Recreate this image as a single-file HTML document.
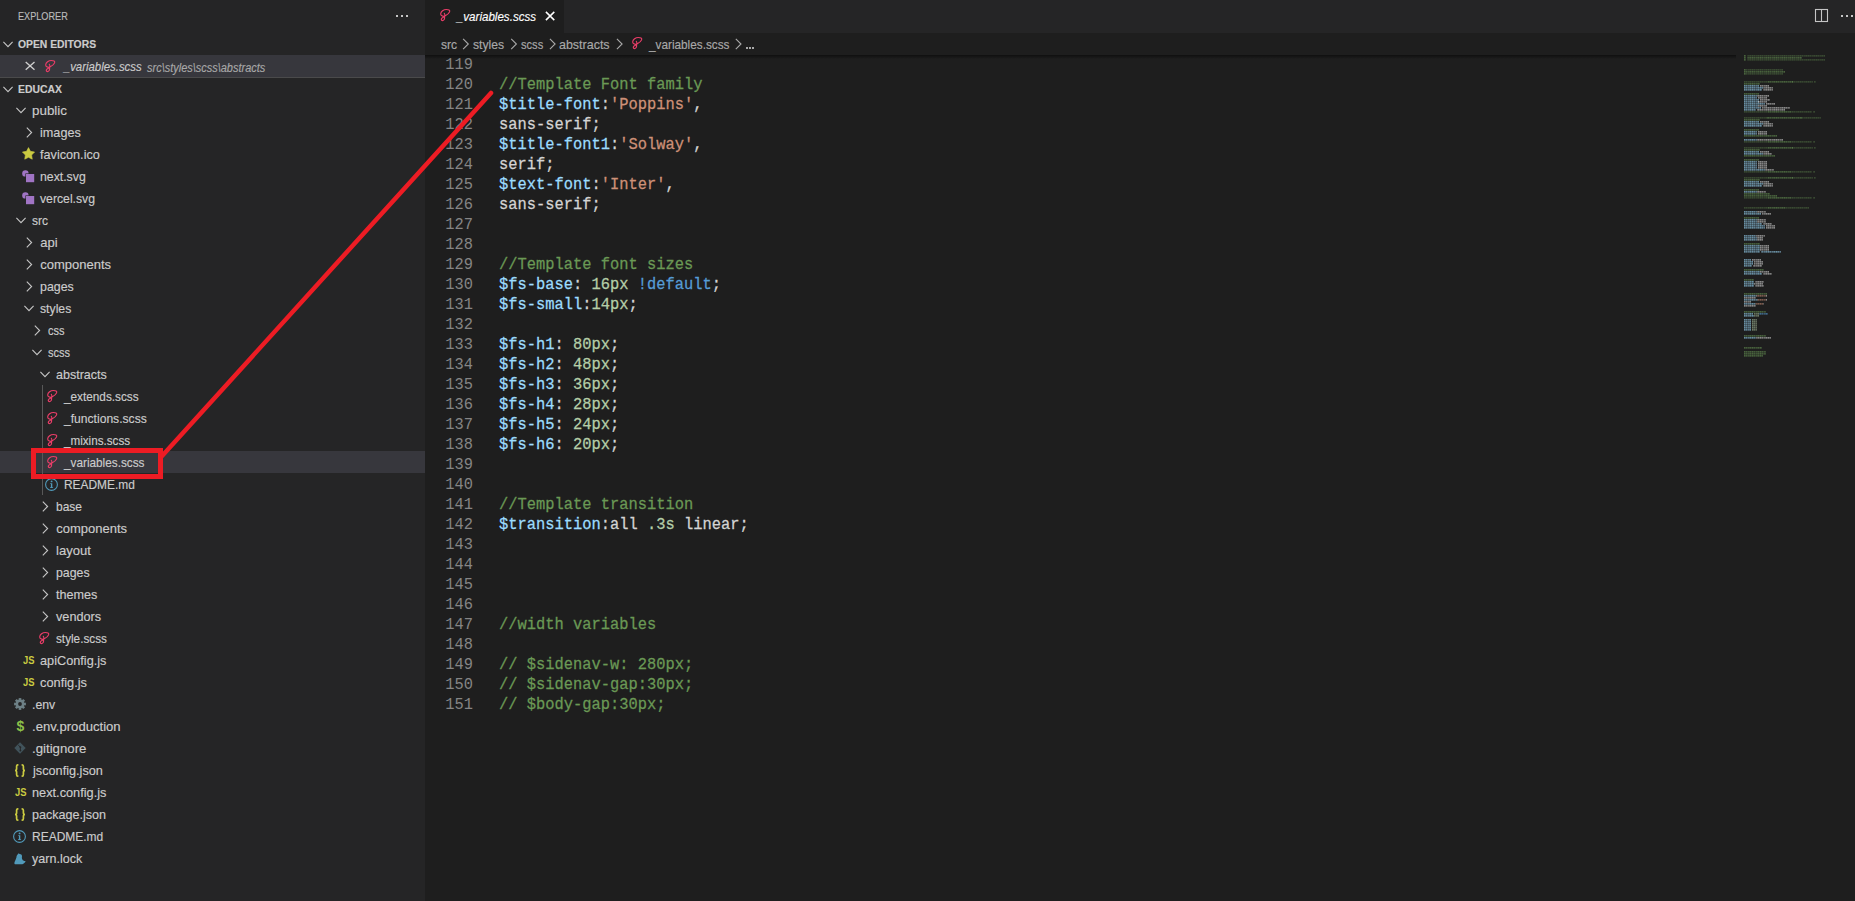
<!DOCTYPE html><html><head><meta charset="utf-8"><title>vscode</title><style>
*{box-sizing:border-box;margin:0;padding:0}
html,body{width:1855px;height:901px;overflow:hidden;background:#1e1e1e}
body{position:relative;font-family:"Liberation Sans",sans-serif;color:#cccccc}
.a{position:absolute;white-space:nowrap}
.tx{-webkit-text-stroke:0.15px currentColor}
svg{position:absolute;overflow:visible}
.code{position:absolute;left:499px;font-family:"Liberation Mono",monospace;font-size:15.42px;white-space:pre;height:20px;line-height:20px;color:#d4d4d4;transform:scaleY(1.07);transform-origin:0 14px;-webkit-text-stroke:0.25px currentColor}
.ln{position:absolute;left:425px;width:48px;text-align:right;color:#858585;font-family:"Liberation Mono",monospace;font-size:15.36px;height:20px;line-height:20px;transform:scaleY(1.07);transform-origin:0 14px}
.c{color:#6a9955}.v{color:#9cdcfe}.s{color:#ce9178}.n{color:#b5cea8}.k{color:#569cd6}
</style></head><body>
<div class="a" style="left:0;top:0;width:425px;height:901px;background:#252526"></div>
<div class="a tx" style="left:18.20px;top:9px;font-size:11px;line-height:14px;color:#bbbbbb;transform:scaleX(0.8300);transform-origin:0.00px 0;">EXPLORER</div>
<div class="a" style="left:396px;top:15px;width:2px;height:2px;background:#c5c5c5"></div>
<div class="a" style="left:401px;top:15px;width:2px;height:2px;background:#c5c5c5"></div>
<div class="a" style="left:406px;top:15px;width:2px;height:2px;background:#c5c5c5"></div>
<div class="a tx" style="left:17.90px;top:33px;font-size:11px;line-height:22px;color:#cccccc;font-weight:bold;transform:scaleX(0.9410);transform-origin:0.00px 0;">OPEN EDITORS</div>
<svg style="left:0;top:0" width="1" height="1"><polyline points="3.4000000000000004,41.9 8,46.7 12.6,41.9" fill="none" stroke="#c5c5c5" stroke-width="1.1"/></svg>
<div class="a" style="left:0;top:55px;width:425px;height:22px;background:#37373d"></div>
<div class="a" style="left:0;top:77px;width:425px;height:1px;background:#4a4a4b"></div>
<div class="a tx" style="left:63.55px;top:56px;font-size:13px;line-height:22px;color:#cccccc;font-style:italic;transform:scaleX(0.8756);transform-origin:-1.25px 0;">_variables.scss</div>
<div class="a tx" style="left:147.30px;top:57px;font-size:12px;line-height:22px;color:#a8a8a8;font-style:italic;transform:scaleX(0.9143);transform-origin:0.00px 0;">src\styles\scss\abstracts</div>
<svg style="left:0;top:0" width="1" height="1"><path d="M25.7 62 L34.5 69.8 M34.5 62 L25.7 69.8" stroke="#cfcfcf" stroke-width="1.35"/></svg>
<svg style="left:41.7px;top:57.0px" width="18" height="18" viewBox="0 0 18 18"><path d="M7.6 10.2 C5.6 10.5 3.5 9.7 3.7 7.7 C3.9 5.5 6.6 3.5 9.4 3.5 C11.6 3.5 13.2 4.3 12.6 5.9 C12 7.5 10 9 7.6 10.2 C7.7 11.4 7.8 12.6 7 13.8 C6.2 15 4.5 15 4.3 13.7 C4.1 12.5 5.6 11.5 7.6 10.8 M7.3 7.3 C7.9 8.3 8.3 9.3 7.6 10.2" fill="none" stroke="#ea3d68" stroke-width="1.15" stroke-linecap="round" stroke-linejoin="round"/></svg>
<div class="a tx" style="left:17.90px;top:78px;font-size:11px;line-height:22px;color:#cccccc;font-weight:bold;transform:scaleX(0.9441);transform-origin:0.00px 0;">EDUCAX</div>
<svg style="left:0;top:0" width="1" height="1"><polyline points="3.4000000000000004,86.9 8,91.69999999999999 12.6,86.9" fill="none" stroke="#c5c5c5" stroke-width="1.1"/></svg>
<div class="a tx" style="left:32.20px;top:100px;font-size:13px;line-height:22px;color:#cccccc;transform:scaleX(1.0294);transform-origin:0.00px 0;">public</div>
<svg style="left:0;top:0" width="1" height="1"><polyline points="16.4,107.9 21,112.69999999999999 25.6,107.9" fill="none" stroke="#c5c5c5" stroke-width="1.1"/></svg>
<div class="a tx" style="left:40.20px;top:122px;font-size:13px;line-height:22px;color:#cccccc;transform:scaleX(0.9738);transform-origin:0.00px 0;">images</div>
<svg style="left:0;top:0" width="1" height="1"><polyline points="26.799999999999997,127.7 31.6,132.5 26.799999999999997,137.3" fill="none" stroke="#c5c5c5" stroke-width="1.1"/></svg>
<div class="a tx" style="left:40.20px;top:144px;font-size:13px;line-height:22px;color:#cccccc;transform:scaleX(0.9740);transform-origin:0.00px 0;">favicon.ico</div>
<svg style="left:21.8px;top:146.7px" width="13" height="13" viewBox="0 0 13 13"><path d="M6.50 0.60 L8.44 4.33 L12.59 5.02 L9.64 8.02 L10.26 12.18 L6.50 10.30 L2.74 12.18 L3.36 8.02 L0.41 5.02 L4.56 4.33 Z" fill="#cbcb41" stroke="#cbcb41" stroke-width="0.6" stroke-linejoin="round"/></svg>
<div class="a tx" style="left:40.20px;top:166px;font-size:13px;line-height:22px;color:#cccccc;transform:scaleX(0.9443);transform-origin:0.00px 0;">next.svg</div>
<svg style="left:22.0px;top:170.0px" width="12" height="12" viewBox="0 0 12 12"><circle cx="3.4" cy="3.4" r="3.2" fill="#a074c4"/><rect x="3.4" y="3.4" width="8.6" height="8.6" fill="#252526"/><rect x="4" y="4" width="8.2" height="8.2" fill="#a074c4"/></svg>
<div class="a tx" style="left:40.20px;top:188px;font-size:13px;line-height:22px;color:#cccccc;transform:scaleX(0.9402);transform-origin:0.00px 0;">vercel.svg</div>
<svg style="left:22.0px;top:192.0px" width="12" height="12" viewBox="0 0 12 12"><circle cx="3.4" cy="3.4" r="3.2" fill="#a074c4"/><rect x="3.4" y="3.4" width="8.6" height="8.6" fill="#252526"/><rect x="4" y="4" width="8.2" height="8.2" fill="#a074c4"/></svg>
<div class="a tx" style="left:32.20px;top:210px;font-size:13px;line-height:22px;color:#cccccc;transform:scaleX(0.9217);transform-origin:0.00px 0;">src</div>
<svg style="left:0;top:0" width="1" height="1"><polyline points="16.4,217.9 21,222.7 25.6,217.9" fill="none" stroke="#c5c5c5" stroke-width="1.1"/></svg>
<div class="a tx" style="left:40.20px;top:232px;font-size:13px;line-height:22px;color:#cccccc;">api</div>
<svg style="left:0;top:0" width="1" height="1"><polyline points="26.799999999999997,237.7 31.6,242.5 26.799999999999997,247.3" fill="none" stroke="#c5c5c5" stroke-width="1.1"/></svg>
<div class="a tx" style="left:40.20px;top:254px;font-size:13px;line-height:22px;color:#cccccc;">components</div>
<svg style="left:0;top:0" width="1" height="1"><polyline points="26.799999999999997,259.7 31.6,264.5 26.799999999999997,269.3" fill="none" stroke="#c5c5c5" stroke-width="1.1"/></svg>
<div class="a tx" style="left:40.20px;top:276px;font-size:13px;line-height:22px;color:#cccccc;transform:scaleX(0.9521);transform-origin:0.00px 0;">pages</div>
<svg style="left:0;top:0" width="1" height="1"><polyline points="26.799999999999997,281.7 31.6,286.5 26.799999999999997,291.3" fill="none" stroke="#c5c5c5" stroke-width="1.1"/></svg>
<div class="a tx" style="left:40.20px;top:298px;font-size:13px;line-height:22px;color:#cccccc;transform:scaleX(0.9414);transform-origin:0.00px 0;">styles</div>
<svg style="left:0;top:0" width="1" height="1"><polyline points="24.4,305.9 29,310.70000000000005 33.6,305.9" fill="none" stroke="#c5c5c5" stroke-width="1.1"/></svg>
<div class="a tx" style="left:48.20px;top:320px;font-size:13px;line-height:22px;color:#cccccc;transform:scaleX(0.8462);transform-origin:0.00px 0;">css</div>
<svg style="left:0;top:0" width="1" height="1"><polyline points="34.8,325.7 39.6,330.5 34.8,335.3" fill="none" stroke="#c5c5c5" stroke-width="1.1"/></svg>
<div class="a tx" style="left:48.20px;top:342px;font-size:13px;line-height:22px;color:#cccccc;transform:scaleX(0.8500);transform-origin:0.00px 0;">scss</div>
<svg style="left:0;top:0" width="1" height="1"><polyline points="32.4,349.9 37,354.70000000000005 41.6,349.9" fill="none" stroke="#c5c5c5" stroke-width="1.1"/></svg>
<div class="a tx" style="left:56.20px;top:364px;font-size:13px;line-height:22px;color:#cccccc;transform:scaleX(0.9630);transform-origin:0.00px 0;">abstracts</div>
<svg style="left:0;top:0" width="1" height="1"><polyline points="40.4,371.9 45,376.70000000000005 49.6,371.9" fill="none" stroke="#c5c5c5" stroke-width="1.1"/></svg>
<div class="a tx" style="left:64.45px;top:386px;font-size:13px;line-height:22px;color:#cccccc;transform:scaleX(0.9063);transform-origin:-0.25px 0;">_extends.scss</div>
<svg style="left:43.9px;top:386.7px" width="18" height="18" viewBox="0 0 18 18"><path d="M7.6 10.2 C5.6 10.5 3.5 9.7 3.7 7.7 C3.9 5.5 6.6 3.5 9.4 3.5 C11.6 3.5 13.2 4.3 12.6 5.9 C12 7.5 10 9 7.6 10.2 C7.7 11.4 7.8 12.6 7 13.8 C6.2 15 4.5 15 4.3 13.7 C4.1 12.5 5.6 11.5 7.6 10.8 M7.3 7.3 C7.9 8.3 8.3 9.3 7.6 10.2" fill="none" stroke="#ea3d68" stroke-width="1.15" stroke-linecap="round" stroke-linejoin="round"/></svg>
<div class="a tx" style="left:64.45px;top:408px;font-size:13px;line-height:22px;color:#cccccc;transform:scaleX(0.9311);transform-origin:-0.25px 0;">_functions.scss</div>
<svg style="left:43.9px;top:408.7px" width="18" height="18" viewBox="0 0 18 18"><path d="M7.6 10.2 C5.6 10.5 3.5 9.7 3.7 7.7 C3.9 5.5 6.6 3.5 9.4 3.5 C11.6 3.5 13.2 4.3 12.6 5.9 C12 7.5 10 9 7.6 10.2 C7.7 11.4 7.8 12.6 7 13.8 C6.2 15 4.5 15 4.3 13.7 C4.1 12.5 5.6 11.5 7.6 10.8 M7.3 7.3 C7.9 8.3 8.3 9.3 7.6 10.2" fill="none" stroke="#ea3d68" stroke-width="1.15" stroke-linecap="round" stroke-linejoin="round"/></svg>
<div class="a tx" style="left:64.45px;top:430px;font-size:13px;line-height:22px;color:#cccccc;transform:scaleX(0.8973);transform-origin:-0.25px 0;">_mixins.scss</div>
<svg style="left:43.9px;top:430.7px" width="18" height="18" viewBox="0 0 18 18"><path d="M7.6 10.2 C5.6 10.5 3.5 9.7 3.7 7.7 C3.9 5.5 6.6 3.5 9.4 3.5 C11.6 3.5 13.2 4.3 12.6 5.9 C12 7.5 10 9 7.6 10.2 C7.7 11.4 7.8 12.6 7 13.8 C6.2 15 4.5 15 4.3 13.7 C4.1 12.5 5.6 11.5 7.6 10.8 M7.3 7.3 C7.9 8.3 8.3 9.3 7.6 10.2" fill="none" stroke="#ea3d68" stroke-width="1.15" stroke-linecap="round" stroke-linejoin="round"/></svg>
<div class="a" style="left:0;top:451px;width:425px;height:22px;background:#37373d"></div>
<div class="a tx" style="left:64.45px;top:452px;font-size:13px;line-height:22px;color:#cccccc;transform:scaleX(0.9056);transform-origin:-0.25px 0;">_variables.scss</div>
<svg style="left:43.9px;top:452.7px" width="18" height="18" viewBox="0 0 18 18"><path d="M7.6 10.2 C5.6 10.5 3.5 9.7 3.7 7.7 C3.9 5.5 6.6 3.5 9.4 3.5 C11.6 3.5 13.2 4.3 12.6 5.9 C12 7.5 10 9 7.6 10.2 C7.7 11.4 7.8 12.6 7 13.8 C6.2 15 4.5 15 4.3 13.7 C4.1 12.5 5.6 11.5 7.6 10.8 M7.3 7.3 C7.9 8.3 8.3 9.3 7.6 10.2" fill="none" stroke="#ea3d68" stroke-width="1.15" stroke-linecap="round" stroke-linejoin="round"/></svg>
<div class="a tx" style="left:64.20px;top:474px;font-size:13px;line-height:22px;color:#cccccc;transform:scaleX(0.9165);transform-origin:0.00px 0;">README.md</div>
<svg style="left:45.4px;top:478.0px" width="13" height="13" viewBox="0 0 13 13"><circle cx="6.5" cy="6.5" r="5.9" fill="none" stroke="#519aba" stroke-width="1.1"/><circle cx="6.6" cy="3.4" r="0.95" fill="#519aba"/><path d="M5.2 5.2 H7.3 V9.2 H8.1 V10 H5 V9.2 H5.9 V6 H5.2 Z" fill="#519aba"/></svg>
<div class="a tx" style="left:56.20px;top:496px;font-size:13px;line-height:22px;color:#cccccc;transform:scaleX(0.9239);transform-origin:0.00px 0;">base</div>
<svg style="left:0;top:0" width="1" height="1"><polyline points="42.8,501.7 47.6,506.5 42.8,511.3" fill="none" stroke="#c5c5c5" stroke-width="1.1"/></svg>
<div class="a tx" style="left:56.20px;top:518px;font-size:13px;line-height:22px;color:#cccccc;">components</div>
<svg style="left:0;top:0" width="1" height="1"><polyline points="42.8,523.7 47.6,528.5 42.8,533.3" fill="none" stroke="#c5c5c5" stroke-width="1.1"/></svg>
<div class="a tx" style="left:56.20px;top:540px;font-size:13px;line-height:22px;color:#cccccc;transform:scaleX(1.0043);transform-origin:0.00px 0;">layout</div>
<svg style="left:0;top:0" width="1" height="1"><polyline points="42.8,545.7 47.6,550.5 42.8,555.3" fill="none" stroke="#c5c5c5" stroke-width="1.1"/></svg>
<div class="a tx" style="left:56.20px;top:562px;font-size:13px;line-height:22px;color:#cccccc;transform:scaleX(0.9493);transform-origin:0.00px 0;">pages</div>
<svg style="left:0;top:0" width="1" height="1"><polyline points="42.8,567.7 47.6,572.5 42.8,577.3" fill="none" stroke="#c5c5c5" stroke-width="1.1"/></svg>
<div class="a tx" style="left:56.20px;top:584px;font-size:13px;line-height:22px;color:#cccccc;transform:scaleX(0.9708);transform-origin:0.00px 0;">themes</div>
<svg style="left:0;top:0" width="1" height="1"><polyline points="42.8,589.7 47.6,594.5 42.8,599.3" fill="none" stroke="#c5c5c5" stroke-width="1.1"/></svg>
<div class="a tx" style="left:56.20px;top:606px;font-size:13px;line-height:22px;color:#cccccc;transform:scaleX(0.9751);transform-origin:0.00px 0;">vendors</div>
<svg style="left:0;top:0" width="1" height="1"><polyline points="42.8,611.7 47.6,616.5 42.8,621.3" fill="none" stroke="#c5c5c5" stroke-width="1.1"/></svg>
<div class="a tx" style="left:56.20px;top:628px;font-size:13px;line-height:22px;color:#cccccc;transform:scaleX(0.9031);transform-origin:0.00px 0;">style.scss</div>
<svg style="left:35.9px;top:628.7px" width="18" height="18" viewBox="0 0 18 18"><path d="M7.6 10.2 C5.6 10.5 3.5 9.7 3.7 7.7 C3.9 5.5 6.6 3.5 9.4 3.5 C11.6 3.5 13.2 4.3 12.6 5.9 C12 7.5 10 9 7.6 10.2 C7.7 11.4 7.8 12.6 7 13.8 C6.2 15 4.5 15 4.3 13.7 C4.1 12.5 5.6 11.5 7.6 10.8 M7.3 7.3 C7.9 8.3 8.3 9.3 7.6 10.2" fill="none" stroke="#ea3d68" stroke-width="1.15" stroke-linecap="round" stroke-linejoin="round"/></svg>
<div class="a tx" style="left:40.20px;top:650px;font-size:13px;line-height:22px;color:#cccccc;transform:scaleX(0.9779);transform-origin:0.00px 0;">apiConfig.js</div>
<div class="a" style="left:23.00px;top:652.90px;font-size:11.2px;line-height:14px;font-weight:bold;color:#cbcb41;transform:scaleX(0.84);transform-origin:0 0">JS</div>
<div class="a tx" style="left:40.20px;top:672px;font-size:13px;line-height:22px;color:#cccccc;transform:scaleX(0.9843);transform-origin:0.00px 0;">config.js</div>
<div class="a" style="left:23.00px;top:674.90px;font-size:11.2px;line-height:14px;font-weight:bold;color:#cbcb41;transform:scaleX(0.84);transform-origin:0 0">JS</div>
<div class="a tx" style="left:32.20px;top:694px;font-size:13px;line-height:22px;color:#cccccc;transform:scaleX(0.9469);transform-origin:0.00px 0;">.env</div>
<svg style="left:13.9px;top:698.0px" width="12" height="12" viewBox="0 0 12 12"><circle cx="6" cy="6" r="4.4" fill="#6d8086"/><rect x="4.7" y="0.1" width="2.6" height="3" fill="#6d8086" transform="rotate(0 6 6)"/><rect x="4.7" y="0.1" width="2.6" height="3" fill="#6d8086" transform="rotate(45 6 6)"/><rect x="4.7" y="0.1" width="2.6" height="3" fill="#6d8086" transform="rotate(90 6 6)"/><rect x="4.7" y="0.1" width="2.6" height="3" fill="#6d8086" transform="rotate(135 6 6)"/><rect x="4.7" y="0.1" width="2.6" height="3" fill="#6d8086" transform="rotate(180 6 6)"/><rect x="4.7" y="0.1" width="2.6" height="3" fill="#6d8086" transform="rotate(225 6 6)"/><rect x="4.7" y="0.1" width="2.6" height="3" fill="#6d8086" transform="rotate(270 6 6)"/><rect x="4.7" y="0.1" width="2.6" height="3" fill="#6d8086" transform="rotate(315 6 6)"/><circle cx="6" cy="6" r="1.9" fill="#252526"/></svg>
<div class="a tx" style="left:32.20px;top:716px;font-size:13px;line-height:22px;color:#cccccc;transform:scaleX(1.0080);transform-origin:0.00px 0;">.env.production</div>
<div class="a" style="left:16.50px;top:718.20px;font-size:14px;line-height:16px;font-weight:bold;color:#8dc149">$</div>
<div class="a tx" style="left:32.20px;top:738px;font-size:13px;line-height:22px;color:#cccccc;transform:scaleX(1.0187);transform-origin:0.00px 0;">.gitignore</div>
<svg style="left:13.7px;top:742.0px" width="12" height="12" viewBox="0 0 12 12"><path d="M6 0.3 L11.7 6 L6 11.7 L0.3 6 Z" fill="#41535b"/><path d="M4.2 3 L6.4 5.2 V9" stroke="#252526" stroke-width="0.9" fill="none"/><circle cx="6.4" cy="5.2" r="0.9" fill="#252526"/><circle cx="6.4" cy="8.6" r="0.9" fill="#252526"/></svg>
<div class="a tx" style="left:32.70px;top:760px;font-size:13px;line-height:22px;color:#cccccc;transform:scaleX(0.9778);transform-origin:-0.50px 0;">jsconfig.json</div>
<svg style="left:14.1px;top:763.5px" width="12" height="13" viewBox="0 0 12 13"><path d="M4.4 0.9 H3.8 C2.8 0.9 2.6 1.6 2.6 2.6 V4.8 C2.6 5.8 2.2 6.5 1 6.5 C2.2 6.5 2.6 7.2 2.6 8.2 V10.4 C2.6 11.4 2.8 12.1 3.8 12.1 H4.4" fill="none" stroke="#cbcb41" stroke-width="1.7"/><path d="M7.6 0.9 H8.2 C9.2 0.9 9.4 1.6 9.4 2.6 V4.8 C9.4 5.8 9.8 6.5 11 6.5 C9.8 6.5 9.4 7.2 9.4 8.2 V10.4 C9.4 11.4 9.2 12.1 8.2 12.1 H7.6" fill="none" stroke="#cbcb41" stroke-width="1.7"/></svg>
<div class="a tx" style="left:32.20px;top:782px;font-size:13px;line-height:22px;color:#cccccc;transform:scaleX(0.9803);transform-origin:0.00px 0;">next.config.js</div>
<div class="a" style="left:15.00px;top:784.90px;font-size:11.2px;line-height:14px;font-weight:bold;color:#cbcb41;transform:scaleX(0.84);transform-origin:0 0">JS</div>
<div class="a tx" style="left:32.20px;top:804px;font-size:13px;line-height:22px;color:#cccccc;transform:scaleX(0.9673);transform-origin:0.00px 0;">package.json</div>
<svg style="left:14.1px;top:807.5px" width="12" height="13" viewBox="0 0 12 13"><path d="M4.4 0.9 H3.8 C2.8 0.9 2.6 1.6 2.6 2.6 V4.8 C2.6 5.8 2.2 6.5 1 6.5 C2.2 6.5 2.6 7.2 2.6 8.2 V10.4 C2.6 11.4 2.8 12.1 3.8 12.1 H4.4" fill="none" stroke="#cbcb41" stroke-width="1.7"/><path d="M7.6 0.9 H8.2 C9.2 0.9 9.4 1.6 9.4 2.6 V4.8 C9.4 5.8 9.8 6.5 11 6.5 C9.8 6.5 9.4 7.2 9.4 8.2 V10.4 C9.4 11.4 9.2 12.1 8.2 12.1 H7.6" fill="none" stroke="#cbcb41" stroke-width="1.7"/></svg>
<div class="a tx" style="left:32.20px;top:826px;font-size:13px;line-height:22px;color:#cccccc;transform:scaleX(0.9217);transform-origin:0.00px 0;">README.md</div>
<svg style="left:13.4px;top:830.0px" width="13" height="13" viewBox="0 0 13 13"><circle cx="6.5" cy="6.5" r="5.9" fill="none" stroke="#519aba" stroke-width="1.1"/><circle cx="6.6" cy="3.4" r="0.95" fill="#519aba"/><path d="M5.2 5.2 H7.3 V9.2 H8.1 V10 H5 V9.2 H5.9 V6 H5.2 Z" fill="#519aba"/></svg>
<div class="a tx" style="left:32.20px;top:848px;font-size:13px;line-height:22px;color:#cccccc;transform:scaleX(0.9646);transform-origin:0.00px 0;">yarn.lock</div>
<svg style="left:13.7px;top:852.6px" width="12" height="12" viewBox="0 0 12 12"><path d="M4.6 0.2 L5.6 1 C6.9 0.9 8 1.8 8 3.1 C8 4.4 7.6 5.1 8.4 6.6 C8.9 7.6 9.8 8.2 11.6 8.1 C11 9.8 9.8 11 8.4 11.2 L1 11.3 C0.4 11 0.2 10 0.6 9 C1.2 7.4 2 6 2.4 4.4 C2.6 3 3 1.9 3.9 1.3 Z" fill="#519aba"/></svg>
<div class="a" style="left:42px;top:385px;width:1px;height:110px;background:#585858"></div>
<div class="a" style="left:425px;top:0;width:1430px;height:33px;background:#252526"></div>
<div class="a" style="left:425px;top:0;width:139px;height:33px;background:#1e1e1e"></div>
<svg style="left:437.0px;top:5.8px" width="18" height="18" viewBox="0 0 18 18"><path d="M7.6 10.2 C5.6 10.5 3.5 9.7 3.7 7.7 C3.9 5.5 6.6 3.5 9.4 3.5 C11.6 3.5 13.2 4.3 12.6 5.9 C12 7.5 10 9 7.6 10.2 C7.7 11.4 7.8 12.6 7 13.8 C6.2 15 4.5 15 4.3 13.7 C4.1 12.5 5.6 11.5 7.6 10.8 M7.3 7.3 C7.9 8.3 8.3 9.3 7.6 10.2" fill="none" stroke="#ea3d68" stroke-width="1.15" stroke-linecap="round" stroke-linejoin="round"/></svg>
<div class="a tx" style="left:457.35px;top:9px;font-size:13px;line-height:16px;color:#ffffff;font-style:italic;transform:scaleX(0.8911);transform-origin:-1.25px 0;">_variables.scss</div>
<svg style="left:0;top:0" width="1" height="1"><path d="M545.9 11.9 L554.3 20.1 M554.3 11.9 L545.9 20.1" stroke="#ffffff" stroke-width="1.5"/></svg>
<div class="a tx" style="left:441.00px;top:36px;font-size:13px;line-height:18px;color:#a9a9a9;transform:scaleX(0.9275);transform-origin:0.00px 0;">src</div>
<div class="a tx" style="left:473.10px;top:36px;font-size:13px;line-height:18px;color:#a9a9a9;transform:scaleX(0.9353);transform-origin:0.00px 0;">styles</div>
<div class="a tx" style="left:520.80px;top:36px;font-size:13px;line-height:18px;color:#a9a9a9;transform:scaleX(0.8538);transform-origin:0.00px 0;">scss</div>
<div class="a tx" style="left:559.30px;top:36px;font-size:13px;line-height:18px;color:#a9a9a9;transform:scaleX(0.9592);transform-origin:0.00px 0;">abstracts</div>
<div class="a tx" style="left:648.85px;top:36px;font-size:13px;line-height:18px;color:#a9a9a9;transform:scaleX(0.9056);transform-origin:-0.25px 0;">_variables.scss</div>
<svg style="left:0;top:0" width="1" height="1"><polyline points="463.09999999999997,38.8 468.3,44 463.09999999999997,49.2" fill="none" stroke="#a9a9a9" stroke-width="1.1"/></svg>
<svg style="left:0;top:0" width="1" height="1"><polyline points="511.2,38.8 516.4,44 511.2,49.2" fill="none" stroke="#a9a9a9" stroke-width="1.1"/></svg>
<svg style="left:0;top:0" width="1" height="1"><polyline points="549.9,38.8 555.0999999999999,44 549.9,49.2" fill="none" stroke="#a9a9a9" stroke-width="1.1"/></svg>
<svg style="left:0;top:0" width="1" height="1"><polyline points="616.9,38.8 622.0999999999999,44 616.9,49.2" fill="none" stroke="#a9a9a9" stroke-width="1.1"/></svg>
<svg style="left:0;top:0" width="1" height="1"><polyline points="735.8000000000001,38.8 741.0,44 735.8000000000001,49.2" fill="none" stroke="#a9a9a9" stroke-width="1.1"/></svg>
<svg style="left:628.6px;top:34.3px" width="18" height="18" viewBox="0 0 18 18"><path d="M7.6 10.2 C5.6 10.5 3.5 9.7 3.7 7.7 C3.9 5.5 6.6 3.5 9.4 3.5 C11.6 3.5 13.2 4.3 12.6 5.9 C12 7.5 10 9 7.6 10.2 C7.7 11.4 7.8 12.6 7 13.8 C6.2 15 4.5 15 4.3 13.7 C4.1 12.5 5.6 11.5 7.6 10.8 M7.3 7.3 C7.9 8.3 8.3 9.3 7.6 10.2" fill="none" stroke="#ea3d68" stroke-width="1.15" stroke-linecap="round" stroke-linejoin="round"/></svg>
<div class="a" style="left:746px;top:47px;width:1.6px;height:1.6px;background:#a9a9a9"></div>
<div class="a" style="left:749px;top:47px;width:1.6px;height:1.6px;background:#a9a9a9"></div>
<div class="a" style="left:752px;top:47px;width:1.6px;height:1.6px;background:#a9a9a9"></div>
<svg style="left:0;top:0" width="1" height="1"><rect x="1815.5" y="9.5" width="12" height="12" fill="none" stroke="#c5c5c5" stroke-width="1.1"/><path d="M1821.5 9.5 V21.5" stroke="#c5c5c5" stroke-width="1.1"/></svg>
<div class="a" style="left:1841px;top:15px;width:2px;height:2px;background:#c5c5c5"></div>
<div class="a" style="left:1846px;top:15px;width:2px;height:2px;background:#c5c5c5"></div>
<div class="a" style="left:1851px;top:15px;width:2px;height:2px;background:#c5c5c5"></div>
<div class="ln" style="top:55px">119</div>
<div class="ln" style="top:75px">120</div>
<div class="code" style="top:75px"><span class="c">//Template Font family</span></div>
<div class="ln" style="top:95px">121</div>
<div class="code" style="top:95px"><span class="v">$title-font</span>:<span class="s">'Poppins'</span>,</div>
<div class="ln" style="top:115px">122</div>
<div class="code" style="top:115px">sans-serif;</div>
<div class="ln" style="top:135px">123</div>
<div class="code" style="top:135px"><span class="v">$title-font1</span>:<span class="s">'Solway'</span>,</div>
<div class="ln" style="top:155px">124</div>
<div class="code" style="top:155px">serif;</div>
<div class="ln" style="top:175px">125</div>
<div class="code" style="top:175px"><span class="v">$text-font</span>:<span class="s">'Inter'</span>,</div>
<div class="ln" style="top:195px">126</div>
<div class="code" style="top:195px">sans-serif;</div>
<div class="ln" style="top:215px">127</div>
<div class="ln" style="top:235px">128</div>
<div class="ln" style="top:255px">129</div>
<div class="code" style="top:255px"><span class="c">//Template font sizes</span></div>
<div class="ln" style="top:275px">130</div>
<div class="code" style="top:275px"><span class="v">$fs-base</span>: <span class="n">16px</span> <span class="k">!default</span>;</div>
<div class="ln" style="top:295px">131</div>
<div class="code" style="top:295px"><span class="v">$fs-small</span>:<span class="n">14px</span>;</div>
<div class="ln" style="top:315px">132</div>
<div class="ln" style="top:335px">133</div>
<div class="code" style="top:335px"><span class="v">$fs-h1</span>: <span class="n">80px</span>;</div>
<div class="ln" style="top:355px">134</div>
<div class="code" style="top:355px"><span class="v">$fs-h2</span>: <span class="n">48px</span>;</div>
<div class="ln" style="top:375px">135</div>
<div class="code" style="top:375px"><span class="v">$fs-h3</span>: <span class="n">36px</span>;</div>
<div class="ln" style="top:395px">136</div>
<div class="code" style="top:395px"><span class="v">$fs-h4</span>: <span class="n">28px</span>;</div>
<div class="ln" style="top:415px">137</div>
<div class="code" style="top:415px"><span class="v">$fs-h5</span>: <span class="n">24px</span>;</div>
<div class="ln" style="top:435px">138</div>
<div class="code" style="top:435px"><span class="v">$fs-h6</span>: <span class="n">20px</span>;</div>
<div class="ln" style="top:455px">139</div>
<div class="ln" style="top:475px">140</div>
<div class="ln" style="top:495px">141</div>
<div class="code" style="top:495px"><span class="c">//Template transition</span></div>
<div class="ln" style="top:515px">142</div>
<div class="code" style="top:515px"><span class="v">$transition</span>:all <span class="n">.3s</span> linear;</div>
<div class="ln" style="top:535px">143</div>
<div class="ln" style="top:555px">144</div>
<div class="ln" style="top:575px">145</div>
<div class="ln" style="top:595px">146</div>
<div class="ln" style="top:615px">147</div>
<div class="code" style="top:615px"><span class="c">//width variables</span></div>
<div class="ln" style="top:635px">148</div>
<div class="ln" style="top:655px">149</div>
<div class="code" style="top:655px"><span class="c">// $sidenav-w: 280px;</span></div>
<div class="ln" style="top:675px">150</div>
<div class="code" style="top:675px"><span class="c">// $sidenav-gap:30px;</span></div>
<div class="ln" style="top:695px">151</div>
<div class="code" style="top:695px"><span class="c">// $body-gap:30px;</span></div>
<div class="a" style="left:425px;top:55px;width:1311px;height:4px;background:linear-gradient(rgba(0,0,0,0.5),rgba(0,0,0,0))"></div>
<svg style="left:0;top:0" width="1855" height="901"><defs><pattern id="mmg" x="1744" y="0" width="8" height="2" patternUnits="userSpaceOnUse"><rect x="0" y="0" width="1" height="2" fill="rgba(106,153,85,0.62)"/><rect x="1" y="0" width="1" height="2" fill="rgba(106,153,85,0.40)"/><rect x="2" y="0" width="1" height="2" fill="rgba(106,153,85,0.56)"/><rect x="3" y="0" width="1" height="2" fill="rgba(106,153,85,0.34)"/><rect x="4" y="0" width="1" height="2" fill="rgba(106,153,85,0.50)"/><rect x="5" y="0" width="1" height="2" fill="rgba(106,153,85,0.43)"/><rect x="6" y="0" width="1" height="2" fill="rgba(106,153,85,0.59)"/><rect x="7" y="0" width="1" height="2" fill="rgba(106,153,85,0.37)"/></pattern><pattern id="mmd" x="1744" y="0" width="8" height="2" patternUnits="userSpaceOnUse"><rect x="0" y="0" width="1" height="2" fill="rgba(106,153,85,0.40)"/><rect x="1" y="0" width="1" height="2" fill="rgba(106,153,85,0.26)"/><rect x="2" y="0" width="1" height="2" fill="rgba(106,153,85,0.36)"/><rect x="3" y="0" width="1" height="2" fill="rgba(106,153,85,0.22)"/><rect x="4" y="0" width="1" height="2" fill="rgba(106,153,85,0.32)"/><rect x="5" y="0" width="1" height="2" fill="rgba(106,153,85,0.28)"/><rect x="6" y="0" width="1" height="2" fill="rgba(106,153,85,0.38)"/><rect x="7" y="0" width="1" height="2" fill="rgba(106,153,85,0.24)"/></pattern><pattern id="mmb" x="1744" y="0" width="8" height="2" patternUnits="userSpaceOnUse"><rect x="0" y="0" width="1" height="2" fill="rgba(156,220,254,0.66)"/><rect x="1" y="0" width="1" height="2" fill="rgba(156,220,254,0.43)"/><rect x="2" y="0" width="1" height="2" fill="rgba(156,220,254,0.59)"/><rect x="3" y="0" width="1" height="2" fill="rgba(156,220,254,0.36)"/><rect x="4" y="0" width="1" height="2" fill="rgba(156,220,254,0.53)"/><rect x="5" y="0" width="1" height="2" fill="rgba(156,220,254,0.46)"/><rect x="6" y="0" width="1" height="2" fill="rgba(156,220,254,0.63)"/><rect x="7" y="0" width="1" height="2" fill="rgba(156,220,254,0.40)"/></pattern><pattern id="mmw" x="1744" y="0" width="8" height="2" patternUnits="userSpaceOnUse"><rect x="0" y="0" width="1" height="2" fill="rgba(212,212,212,0.66)"/><rect x="1" y="0" width="1" height="2" fill="rgba(212,212,212,0.43)"/><rect x="2" y="0" width="1" height="2" fill="rgba(212,212,212,0.59)"/><rect x="3" y="0" width="1" height="2" fill="rgba(212,212,212,0.36)"/><rect x="4" y="0" width="1" height="2" fill="rgba(212,212,212,0.53)"/><rect x="5" y="0" width="1" height="2" fill="rgba(212,212,212,0.46)"/><rect x="6" y="0" width="1" height="2" fill="rgba(212,212,212,0.63)"/><rect x="7" y="0" width="1" height="2" fill="rgba(212,212,212,0.40)"/></pattern><pattern id="mmo" x="1744" y="0" width="8" height="2" patternUnits="userSpaceOnUse"><rect x="0" y="0" width="1" height="2" fill="rgba(206,145,120,0.62)"/><rect x="1" y="0" width="1" height="2" fill="rgba(206,145,120,0.40)"/><rect x="2" y="0" width="1" height="2" fill="rgba(206,145,120,0.56)"/><rect x="3" y="0" width="1" height="2" fill="rgba(206,145,120,0.34)"/><rect x="4" y="0" width="1" height="2" fill="rgba(206,145,120,0.50)"/><rect x="5" y="0" width="1" height="2" fill="rgba(206,145,120,0.43)"/><rect x="6" y="0" width="1" height="2" fill="rgba(206,145,120,0.59)"/><rect x="7" y="0" width="1" height="2" fill="rgba(206,145,120,0.37)"/></pattern><pattern id="mmn" x="1744" y="0" width="8" height="2" patternUnits="userSpaceOnUse"><rect x="0" y="0" width="1" height="2" fill="rgba(181,206,168,0.60)"/><rect x="1" y="0" width="1" height="2" fill="rgba(181,206,168,0.39)"/><rect x="2" y="0" width="1" height="2" fill="rgba(181,206,168,0.54)"/><rect x="3" y="0" width="1" height="2" fill="rgba(181,206,168,0.33)"/><rect x="4" y="0" width="1" height="2" fill="rgba(181,206,168,0.48)"/><rect x="5" y="0" width="1" height="2" fill="rgba(181,206,168,0.42)"/><rect x="6" y="0" width="1" height="2" fill="rgba(181,206,168,0.57)"/><rect x="7" y="0" width="1" height="2" fill="rgba(181,206,168,0.36)"/></pattern><pattern id="mmk" x="1744" y="0" width="8" height="2" patternUnits="userSpaceOnUse"><rect x="0" y="0" width="1" height="2" fill="rgba(86,156,214,0.68)"/><rect x="1" y="0" width="1" height="2" fill="rgba(86,156,214,0.44)"/><rect x="2" y="0" width="1" height="2" fill="rgba(86,156,214,0.61)"/><rect x="3" y="0" width="1" height="2" fill="rgba(86,156,214,0.37)"/><rect x="4" y="0" width="1" height="2" fill="rgba(86,156,214,0.54)"/><rect x="5" y="0" width="1" height="2" fill="rgba(86,156,214,0.48)"/><rect x="6" y="0" width="1" height="2" fill="rgba(86,156,214,0.65)"/><rect x="7" y="0" width="1" height="2" fill="rgba(86,156,214,0.41)"/></pattern></defs><rect x="1744" y="55.1" width="2" height="1.5" fill="url(#mmg)"/><rect x="1747" y="55.1" width="78" height="1.5" fill="url(#mmd)"/><rect x="1744" y="57.1" width="2" height="1.5" fill="url(#mmg)"/><rect x="1747" y="57.1" width="55" height="1.5" fill="url(#mmg)"/><rect x="1744" y="59.1" width="2" height="1.5" fill="url(#mmg)"/><rect x="1747" y="59.1" width="78" height="1.5" fill="url(#mmd)"/><rect x="1744" y="69.1" width="2" height="1.5" fill="url(#mmg)"/><rect x="1746" y="69.1" width="37" height="1.5" fill="url(#mmd)"/><rect x="1744" y="71.1" width="41" height="1.5" fill="url(#mmg)"/><rect x="1744" y="73.1" width="2" height="1.5" fill="url(#mmg)"/><rect x="1746" y="73.1" width="37" height="1.5" fill="url(#mmd)"/><rect x="1744" y="81.1" width="24" height="1.5" fill="url(#mmd)"/><rect x="1768" y="81.1" width="25" height="1.5" fill="url(#mmg)"/><rect x="1792" y="81.1" width="21" height="1.5" fill="url(#mmd)"/><rect x="1814" y="81.1" width="2" height="1.5" fill="url(#mmd)"/><rect x="1744" y="83.1" width="16" height="1.5" fill="url(#mmg)"/><rect x="1744" y="85.1" width="15" height="1.5" fill="url(#mmb)"/><rect x="1760" y="85.1" width="9" height="1.5" fill="url(#mmw)"/><rect x="1744" y="87.1" width="19" height="1.5" fill="url(#mmb)"/><rect x="1763" y="87.1" width="10" height="1.5" fill="url(#mmw)"/><rect x="1744" y="89.1" width="18" height="1.5" fill="url(#mmb)"/><rect x="1763" y="89.1" width="10" height="1.5" fill="url(#mmw)"/><rect x="1744" y="93.1" width="15" height="1.5" fill="url(#mmg)"/><rect x="1744" y="95.1" width="13" height="1.5" fill="url(#mmb)"/><rect x="1757" y="95.1" width="12" height="1.5" fill="url(#mmw)"/><rect x="1744" y="97.1" width="13" height="1.5" fill="url(#mmb)"/><rect x="1758" y="97.1" width="9" height="1.5" fill="url(#mmw)"/><rect x="1744" y="99.1" width="15" height="1.5" fill="url(#mmb)"/><rect x="1760" y="99.1" width="10" height="1.5" fill="url(#mmw)"/><rect x="1744" y="101.1" width="15" height="1.5" fill="url(#mmb)"/><rect x="1758" y="101.1" width="9" height="1.5" fill="url(#mmw)"/><rect x="1744" y="103.1" width="21" height="1.5" fill="url(#mmb)"/><rect x="1766" y="103.1" width="9" height="1.5" fill="url(#mmw)"/><rect x="1744" y="105.1" width="14" height="1.5" fill="url(#mmb)"/><rect x="1758" y="105.1" width="9" height="1.5" fill="url(#mmw)"/><rect x="1744" y="107.1" width="17" height="1.5" fill="url(#mmb)"/><rect x="1762" y="107.1" width="28" height="1.5" fill="url(#mmw)"/><rect x="1744" y="109.1" width="12" height="1.5" fill="url(#mmb)"/><rect x="1757" y="109.1" width="28" height="1.5" fill="url(#mmw)"/><rect x="1744" y="111.1" width="24" height="1.5" fill="url(#mmd)"/><rect x="1768" y="111.1" width="23" height="1.5" fill="url(#mmg)"/><rect x="1791" y="111.1" width="21" height="1.5" fill="url(#mmd)"/><rect x="1813" y="111.1" width="2" height="1.5" fill="url(#mmd)"/><rect x="1744" y="117.1" width="24" height="1.5" fill="url(#mmd)"/><rect x="1767" y="117.1" width="35" height="1.5" fill="url(#mmg)"/><rect x="1801" y="117.1" width="18" height="1.5" fill="url(#mmd)"/><rect x="1819" y="117.1" width="2" height="1.5" fill="url(#mmd)"/><rect x="1744" y="119.1" width="16" height="1.5" fill="url(#mmg)"/><rect x="1744" y="121.1" width="15" height="1.5" fill="url(#mmb)"/><rect x="1760" y="121.1" width="9" height="1.5" fill="url(#mmw)"/><rect x="1744" y="123.1" width="19" height="1.5" fill="url(#mmb)"/><rect x="1763" y="123.1" width="10" height="1.5" fill="url(#mmw)"/><rect x="1744" y="125.1" width="18" height="1.5" fill="url(#mmb)"/><rect x="1763" y="125.1" width="10" height="1.5" fill="url(#mmw)"/><rect x="1744" y="129.1" width="15" height="1.5" fill="url(#mmg)"/><rect x="1744" y="131.1" width="13" height="1.5" fill="url(#mmb)"/><rect x="1758" y="131.1" width="9" height="1.5" fill="url(#mmw)"/><rect x="1744" y="133.1" width="13" height="1.5" fill="url(#mmb)"/><rect x="1758" y="133.1" width="9" height="1.5" fill="url(#mmw)"/><rect x="1744" y="135.1" width="33" height="1.5" fill="url(#mmg)"/><rect x="1744" y="139.1" width="13" height="1.5" fill="url(#mmb)"/><rect x="1757" y="139.1" width="26" height="1.5" fill="url(#mmw)"/><rect x="1744" y="141.1" width="24" height="1.5" fill="url(#mmd)"/><rect x="1768" y="141.1" width="23" height="1.5" fill="url(#mmg)"/><rect x="1791" y="141.1" width="21" height="1.5" fill="url(#mmd)"/><rect x="1813" y="141.1" width="2" height="1.5" fill="url(#mmd)"/><rect x="1744" y="147.1" width="24" height="1.5" fill="url(#mmd)"/><rect x="1768" y="147.1" width="25" height="1.5" fill="url(#mmg)"/><rect x="1792" y="147.1" width="21" height="1.5" fill="url(#mmd)"/><rect x="1814" y="147.1" width="2" height="1.5" fill="url(#mmd)"/><rect x="1744" y="149.1" width="16" height="1.5" fill="url(#mmg)"/><rect x="1744" y="151.1" width="15" height="1.5" fill="url(#mmb)"/><rect x="1760" y="151.1" width="9" height="1.5" fill="url(#mmw)"/><rect x="1744" y="153.1" width="19" height="1.5" fill="url(#mmb)"/><rect x="1763" y="153.1" width="9" height="1.5" fill="url(#mmw)"/><rect x="1744" y="155.1" width="31" height="1.5" fill="url(#mmg)"/><rect x="1744" y="159.1" width="15" height="1.5" fill="url(#mmg)"/><rect x="1744" y="161.1" width="13" height="1.5" fill="url(#mmb)"/><rect x="1758" y="161.1" width="9" height="1.5" fill="url(#mmw)"/><rect x="1744" y="163.1" width="13" height="1.5" fill="url(#mmb)"/><rect x="1758" y="163.1" width="9" height="1.5" fill="url(#mmw)"/><rect x="1744" y="165.1" width="13" height="1.5" fill="url(#mmb)"/><rect x="1758" y="165.1" width="9" height="1.5" fill="url(#mmw)"/><rect x="1744" y="167.1" width="13" height="1.5" fill="url(#mmb)"/><rect x="1758" y="167.1" width="9" height="1.5" fill="url(#mmw)"/><rect x="1744" y="169.1" width="21" height="1.5" fill="url(#mmb)"/><rect x="1765" y="169.1" width="9" height="1.5" fill="url(#mmw)"/><rect x="1744" y="171.1" width="24" height="1.5" fill="url(#mmd)"/><rect x="1768" y="171.1" width="23" height="1.5" fill="url(#mmg)"/><rect x="1791" y="171.1" width="21" height="1.5" fill="url(#mmd)"/><rect x="1813" y="171.1" width="2" height="1.5" fill="url(#mmd)"/><rect x="1744" y="177.1" width="24" height="1.5" fill="url(#mmd)"/><rect x="1768" y="177.1" width="25" height="1.5" fill="url(#mmg)"/><rect x="1792" y="177.1" width="21" height="1.5" fill="url(#mmd)"/><rect x="1814" y="177.1" width="2" height="1.5" fill="url(#mmd)"/><rect x="1744" y="179.1" width="16" height="1.5" fill="url(#mmg)"/><rect x="1744" y="181.1" width="15" height="1.5" fill="url(#mmb)"/><rect x="1760" y="181.1" width="9" height="1.5" fill="url(#mmw)"/><rect x="1744" y="183.1" width="19" height="1.5" fill="url(#mmb)"/><rect x="1763" y="183.1" width="10" height="1.5" fill="url(#mmw)"/><rect x="1744" y="185.1" width="18" height="1.5" fill="url(#mmb)"/><rect x="1763" y="185.1" width="10" height="1.5" fill="url(#mmw)"/><rect x="1744" y="189.1" width="15" height="1.5" fill="url(#mmg)"/><rect x="1744" y="191.1" width="13" height="1.5" fill="url(#mmb)"/><rect x="1757" y="191.1" width="9" height="1.5" fill="url(#mmw)"/><rect x="1744" y="193.1" width="26" height="1.5" fill="url(#mmg)"/><rect x="1744" y="195.1" width="33" height="1.5" fill="url(#mmg)"/><rect x="1744" y="197.1" width="24" height="1.5" fill="url(#mmd)"/><rect x="1768" y="197.1" width="23" height="1.5" fill="url(#mmg)"/><rect x="1791" y="197.1" width="21" height="1.5" fill="url(#mmd)"/><rect x="1813" y="197.1" width="2" height="1.5" fill="url(#mmd)"/><rect x="1744" y="207.1" width="24" height="1.5" fill="url(#mmd)"/><rect x="1768" y="207.1" width="17" height="1.5" fill="url(#mmg)"/><rect x="1785" y="207.1" width="24" height="1.5" fill="url(#mmd)"/><rect x="1744" y="211.1" width="13" height="1.5" fill="url(#mmb)"/><rect x="1757" y="211.1" width="9" height="1.5" fill="url(#mmw)"/><rect x="1744" y="213.1" width="17" height="1.5" fill="url(#mmb)"/><rect x="1762" y="213.1" width="9" height="1.5" fill="url(#mmw)"/><rect x="1744" y="217.1" width="15" height="1.5" fill="url(#mmg)"/><rect x="1744" y="219.1" width="13" height="1.5" fill="url(#mmb)"/><rect x="1757" y="219.1" width="9" height="1.5" fill="url(#mmw)"/><rect x="1744" y="221.1" width="13" height="1.5" fill="url(#mmb)"/><rect x="1757" y="221.1" width="9" height="1.5" fill="url(#mmw)"/><rect x="1744" y="223.1" width="18" height="1.5" fill="url(#mmb)"/><rect x="1763" y="223.1" width="9" height="1.5" fill="url(#mmw)"/><rect x="1744" y="225.1" width="21" height="1.5" fill="url(#mmb)"/><rect x="1766" y="225.1" width="9" height="1.5" fill="url(#mmw)"/><rect x="1744" y="227.1" width="21" height="1.5" fill="url(#mmb)"/><rect x="1766" y="227.1" width="9" height="1.5" fill="url(#mmw)"/><rect x="1744" y="235.1" width="12" height="1.5" fill="url(#mmb)"/><rect x="1756" y="235.1" width="9" height="1.5" fill="url(#mmw)"/><rect x="1744" y="237.1" width="13" height="1.5" fill="url(#mmb)"/><rect x="1757" y="237.1" width="6" height="1.5" fill="url(#mmw)"/><rect x="1744" y="239.1" width="13" height="1.5" fill="url(#mmb)"/><rect x="1757" y="239.1" width="6" height="1.5" fill="url(#mmw)"/><rect x="1744" y="243.1" width="16" height="1.5" fill="url(#mmg)"/><rect x="1744" y="245.1" width="16" height="1.5" fill="url(#mmb)"/><rect x="1760" y="245.1" width="9" height="1.5" fill="url(#mmw)"/><rect x="1744" y="247.1" width="16" height="1.5" fill="url(#mmb)"/><rect x="1760" y="247.1" width="9" height="1.5" fill="url(#mmw)"/><rect x="1744" y="249.1" width="16" height="1.5" fill="url(#mmb)"/><rect x="1760" y="249.1" width="9" height="1.5" fill="url(#mmw)"/><rect x="1744" y="251.1" width="16" height="1.5" fill="url(#mmb)"/><rect x="1761" y="251.1" width="20" height="1.5" fill="url(#mmb)"/><rect x="1744" y="259.1" width="7" height="1.5" fill="url(#mmb)"/><rect x="1752" y="259.1" width="9" height="1.5" fill="url(#mmw)"/><rect x="1744" y="261.1" width="9" height="1.5" fill="url(#mmb)"/><rect x="1754" y="261.1" width="9" height="1.5" fill="url(#mmw)"/><rect x="1744" y="263.1" width="9" height="1.5" fill="url(#mmb)"/><rect x="1754" y="263.1" width="9" height="1.5" fill="url(#mmw)"/><rect x="1744" y="265.1" width="8" height="1.5" fill="url(#mmb)"/><rect x="1753" y="265.1" width="9" height="1.5" fill="url(#mmw)"/><rect x="1744" y="269.1" width="20" height="1.5" fill="url(#mmg)"/><rect x="1744" y="271.1" width="16" height="1.5" fill="url(#mmb)"/><rect x="1760" y="271.1" width="9" height="1.5" fill="url(#mmw)"/><rect x="1744" y="273.1" width="18" height="1.5" fill="url(#mmb)"/><rect x="1763" y="273.1" width="9" height="1.5" fill="url(#mmw)"/><rect x="1744" y="279.1" width="10" height="1.5" fill="url(#mmg)"/><rect x="1744" y="281.1" width="10" height="1.5" fill="url(#mmb)"/><rect x="1755" y="281.1" width="9" height="1.5" fill="url(#mmw)"/><rect x="1744" y="283.1" width="10" height="1.5" fill="url(#mmb)"/><rect x="1754" y="283.1" width="9" height="1.5" fill="url(#mmw)"/><rect x="1744" y="285.1" width="10" height="1.5" fill="url(#mmb)"/><rect x="1755" y="285.1" width="9" height="1.5" fill="url(#mmw)"/><rect x="1744" y="293.1" width="23" height="1.5" fill="url(#mmg)"/><rect x="1744" y="295.1" width="12" height="1.5" fill="url(#mmb)"/><rect x="1756" y="295.1" width="1" height="1.5" fill="url(#mmw)"/><rect x="1757" y="295.1" width="9" height="1.5" fill="url(#mmo)"/><rect x="1766" y="295.1" width="1" height="1.5" fill="url(#mmw)"/><rect x="1744" y="297.1" width="12" height="1.5" fill="url(#mmw)"/><rect x="1744" y="299.1" width="13" height="1.5" fill="url(#mmb)"/><rect x="1757" y="299.1" width="1" height="1.5" fill="url(#mmw)"/><rect x="1758" y="299.1" width="8" height="1.5" fill="url(#mmo)"/><rect x="1766" y="299.1" width="1" height="1.5" fill="url(#mmw)"/><rect x="1744" y="301.1" width="7" height="1.5" fill="url(#mmw)"/><rect x="1744" y="303.1" width="11" height="1.5" fill="url(#mmb)"/><rect x="1755" y="303.1" width="1" height="1.5" fill="url(#mmw)"/><rect x="1756" y="303.1" width="7" height="1.5" fill="url(#mmo)"/><rect x="1763" y="303.1" width="1" height="1.5" fill="url(#mmw)"/><rect x="1744" y="305.1" width="12" height="1.5" fill="url(#mmw)"/><rect x="1744" y="311.1" width="22" height="1.5" fill="url(#mmg)"/><rect x="1744" y="313.1" width="9" height="1.5" fill="url(#mmb)"/><rect x="1754" y="313.1" width="5" height="1.5" fill="url(#mmn)"/><rect x="1759" y="313.1" width="9" height="1.5" fill="url(#mmk)"/><rect x="1744" y="315.1" width="10" height="1.5" fill="url(#mmb)"/><rect x="1754" y="315.1" width="5" height="1.5" fill="url(#mmn)"/><rect x="1744" y="319.1" width="7" height="1.5" fill="url(#mmb)"/><rect x="1752" y="319.1" width="5" height="1.5" fill="url(#mmn)"/><rect x="1744" y="321.1" width="7" height="1.5" fill="url(#mmb)"/><rect x="1752" y="321.1" width="5" height="1.5" fill="url(#mmn)"/><rect x="1744" y="323.1" width="7" height="1.5" fill="url(#mmb)"/><rect x="1752" y="323.1" width="5" height="1.5" fill="url(#mmn)"/><rect x="1744" y="325.1" width="7" height="1.5" fill="url(#mmb)"/><rect x="1752" y="325.1" width="5" height="1.5" fill="url(#mmn)"/><rect x="1744" y="327.1" width="7" height="1.5" fill="url(#mmb)"/><rect x="1752" y="327.1" width="5" height="1.5" fill="url(#mmn)"/><rect x="1744" y="329.1" width="7" height="1.5" fill="url(#mmb)"/><rect x="1752" y="329.1" width="5" height="1.5" fill="url(#mmn)"/><rect x="1744" y="335.1" width="22" height="1.5" fill="url(#mmg)"/><rect x="1744" y="337.1" width="12" height="1.5" fill="url(#mmb)"/><rect x="1756" y="337.1" width="15" height="1.5" fill="url(#mmw)"/><rect x="1744" y="347.1" width="18" height="1.5" fill="url(#mmg)"/><rect x="1744" y="351.1" width="22" height="1.5" fill="url(#mmg)"/><rect x="1744" y="353.1" width="22" height="1.5" fill="url(#mmg)"/><rect x="1744" y="355.1" width="19" height="1.5" fill="url(#mmg)"/></svg>
<svg style="left:0;top:0" width="1855" height="901"><rect x="33.5" y="450.5" width="127" height="26" fill="none" stroke="#ed1c24" stroke-width="5"/><line x1="162" y1="456" x2="491" y2="93" stroke="#ed1c24" stroke-width="4.5" stroke-linecap="round"/></svg>
</body></html>
